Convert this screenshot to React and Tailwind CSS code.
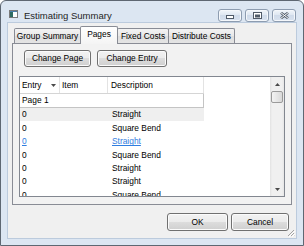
const ROWS = [
  { entry: '0', desc: 'Straight', shaded: true },
  { entry: '0', desc: 'Square Bend' },
  { entry: '0', desc: 'Straight', link: true },
  { entry: '0', desc: 'Square Bend' },
  { entry: '0', desc: 'Straight' },
  { entry: '0', desc: 'Straight' },
  { entry: '0', desc: 'Square Bend' },
];

const TABS = [
  { label: 'Group Summary', w: 'w-[67px]' },
  { label: 'Pages', w: 'w-[38px]', active: true },
  { label: 'Fixed Costs', w: 'w-[52px]' },
  { label: 'Distribute Costs', w: 'w-[67px]' },
];

function Button({ children, className }) {
  return (
    <div
      className={`flex items-center justify-center rounded-[3px] border border-[#707070] bg-[linear-gradient(#f2f2f2_0%,#ebebeb_50%,#dddddd_50%,#cfcfcf_100%)] shadow-[inset_0_0_0_1px_#fbfbfb] text-[8.4px] leading-none text-black ${className}`}
    >
      {children}
    </div>
  );
}

function CaptionButton({ children }) {
  return (
    <div className="flex h-[13px] w-[24px] items-center justify-center rounded-[3px] border border-[#8d9cb0] bg-[linear-gradient(#f1f5fa,#dde6f1_50%,#d0dbea_50%,#d8e2ef)] shadow-[inset_0_0_0_1px_#f4f7fb]">
      {children}
    </div>
  );
}

function Arrow({ up }) {
  return (
    <svg width="5" height="3" viewBox="0 0 5 3">
      <path d={up ? 'M0 3 L2.5 0 L5 3 Z' : 'M0 0 L5 0 L2.5 3 Z'} fill="#4a4a4a" />
    </svg>
  );
}

export default function App() {
  return (
    <div className="h-[246px] w-[304px] bg-white font-['Liberation_Sans',Arial,sans-serif] text-black">
      <div className="flex h-[246px] w-[304px] flex-col rounded-t-[6px] border border-[#5e6772] bg-[#dce6f2]">
        {/* title bar */}
        <div className="flex h-[22px] items-start pl-[8px] pr-[7px] pt-[8px]">
          <svg width="9" height="8" viewBox="0 0 9 8" className="mt-[1px]">
            <rect x="0.5" y="0.5" width="8" height="7" fill="#fff" stroke="#7a7a7a" />
            <rect x="1" y="1" width="3" height="6" fill="#2f6c62" />
            <rect x="1" y="1" width="7" height="1" fill="#4a7fae" />
          </svg>
          <div className="ml-[6px] flex h-[13px] flex-1 items-center text-[9.5px] leading-none text-[#1e1e1e]">
            Estimating Summary
          </div>
          <div className="flex gap-[3px]">
            <CaptionButton>
              <svg width="8" height="4" viewBox="0 0 8 4" className="mt-[3px]">
                <rect x="0.5" y="0.5" width="7" height="3" fill="#fff" stroke="#4f5a68" />
              </svg>
            </CaptionButton>
            <CaptionButton>
              <svg width="9" height="7" viewBox="0 0 9 7">
                <rect x="0.5" y="0.5" width="8" height="6" fill="#fff" stroke="#4f5a68" />
                <rect x="2" y="2.5" width="5" height="3" fill="#4f5a68" />
              </svg>
            </CaptionButton>
            <CaptionButton>
              <svg width="9" height="7" viewBox="0 0 9 7">
                <path d="M1 0.8 L8 6.2 M8 0.8 L1 6.2" stroke="#4f5a68" strokeWidth="2.6" />
                <path d="M1 0.8 L8 6.2 M8 0.8 L1 6.2" stroke="#fff" strokeWidth="1" />
              </svg>
            </CaptionButton>
          </div>
        </div>

        {/* client area */}
        <div className="relative mx-[7px] mb-[7px] flex flex-1 flex-col bg-[#f0f0f0] px-[4px] pt-[3px] shadow-[0_0_0_1px_#bccbdd]">
          <div className="flex h-[17px] items-end pl-[2px]">
            {TABS.map((tab, i) =>
              tab.active ? (
                <div
                  key={tab.label}
                  className={`relative z-10 -mb-px -ml-px flex h-[18px] items-center justify-center rounded-t-[2px] border border-b-0 border-[#898c95] bg-[linear-gradient(#ffffff,#f4f4f4)] pb-[2px] text-[8.4px] leading-none ${tab.w}`}
                >
                  {tab.label}
                </div>
              ) : (
                <div
                  key={tab.label}
                  className={`flex h-[15px] items-center justify-center rounded-t-[2px] border border-b-0 border-[#898c95] bg-[linear-gradient(#f3f3f3,#e8e8e8_50%,#dedede_50%,#e4e4e4)] text-[8.4px] leading-none ${i > 0 ? '-ml-px' : ''} ${tab.w}`}
                >
                  {tab.label}
                </div>
              )
            )}
          </div>

          {/* tab panel */}
          <div className="flex h-[162px] flex-col border border-[#898c95] bg-[#f2f2f2] px-[6px] pt-[6px]">
            <div className="flex gap-[6px] pl-[5px]">
              <Button className="h-[17px] w-[67px]">Change Page</Button>
              <Button className="h-[17px] w-[70px]">Change Entry</Button>
            </div>

            {/* list */}
            <div className="mt-[9px] flex h-[121px] w-[266px] border border-[#828790] bg-white">
              <div className="flex flex-1 flex-col overflow-hidden">
                <div className="flex h-[17px] w-[184px] shrink-0 border-b border-[#d5d5d5] text-[8.4px] leading-none">
                  <div className="flex w-[40px] items-center justify-between border-r border-[#e3e3e3] pl-[2px] pr-[3px]">
                    <span>Entry</span>
                    <Arrow />
                  </div>
                  <div className="flex w-[48px] items-center border-r border-[#e3e3e3] pl-[2px]">Item</div>
                  <div className="flex flex-1 items-center border-r border-[#e3e3e3] pl-[3px]">Description</div>
                </div>
                <div className="flex h-[14px] w-[184px] shrink-0 items-center border-b border-r border-[#c4c4c4] pl-[2px] text-[8.4px] leading-none">
                  Page 1
                </div>
                {ROWS.map((row, i) => (
                  <div
                    key={i}
                    className={`flex h-[13.4px] w-[184px] shrink-0 items-center text-[8.4px] leading-none ${row.shaded ? 'bg-[#efefef]' : ''} ${row.link ? 'text-[#2f7de0] underline' : ''}`}
                  >
                    <div className="w-[88px] pl-[2px]">{row.entry}</div>
                    <div className="pl-[4px]">{row.desc}</div>
                  </div>
                ))}
              </div>

              {/* scrollbar */}
              <div className="flex w-[14px] flex-col bg-[linear-gradient(90deg,#e2e2e2,#f0f0f0_15%,#f0f0f0_85%,#e6e6e6)]">
                <div className="flex h-[14px] items-center justify-center">
                  <Arrow up />
                </div>
                <div className="mx-[1px] h-[12px] rounded-[2px] border border-[#9a9a9a] bg-[linear-gradient(90deg,#f3f3f3,#e6e6e6_50%,#d9d9d9)]" />
                <div className="flex-1" />
                <div className="flex h-[14px] items-center justify-center">
                  <Arrow />
                </div>
              </div>
            </div>
          </div>

          <div className="mt-[8px] flex justify-end gap-[3px] pr-[3px]">
            <Button className="h-[18px] w-[61px]">OK</Button>
            <Button className="h-[18px] w-[58px]">Cancel</Button>
          </div>

          {/* size grip */}
          <svg width="8" height="8" viewBox="0 0 8 8" className="absolute bottom-[1px] right-[1px]">
            <path d="M7 1 L1 7 M7 4 L4 7 M7 6.5 L6.5 7" stroke="#a3a3a3" strokeWidth="1" />
            <path d="M8 2 L2 8 M8 5 L5 8" stroke="#ffffff" strokeWidth="1" />
          </svg>
        </div>
      </div>
    </div>
  );
}
